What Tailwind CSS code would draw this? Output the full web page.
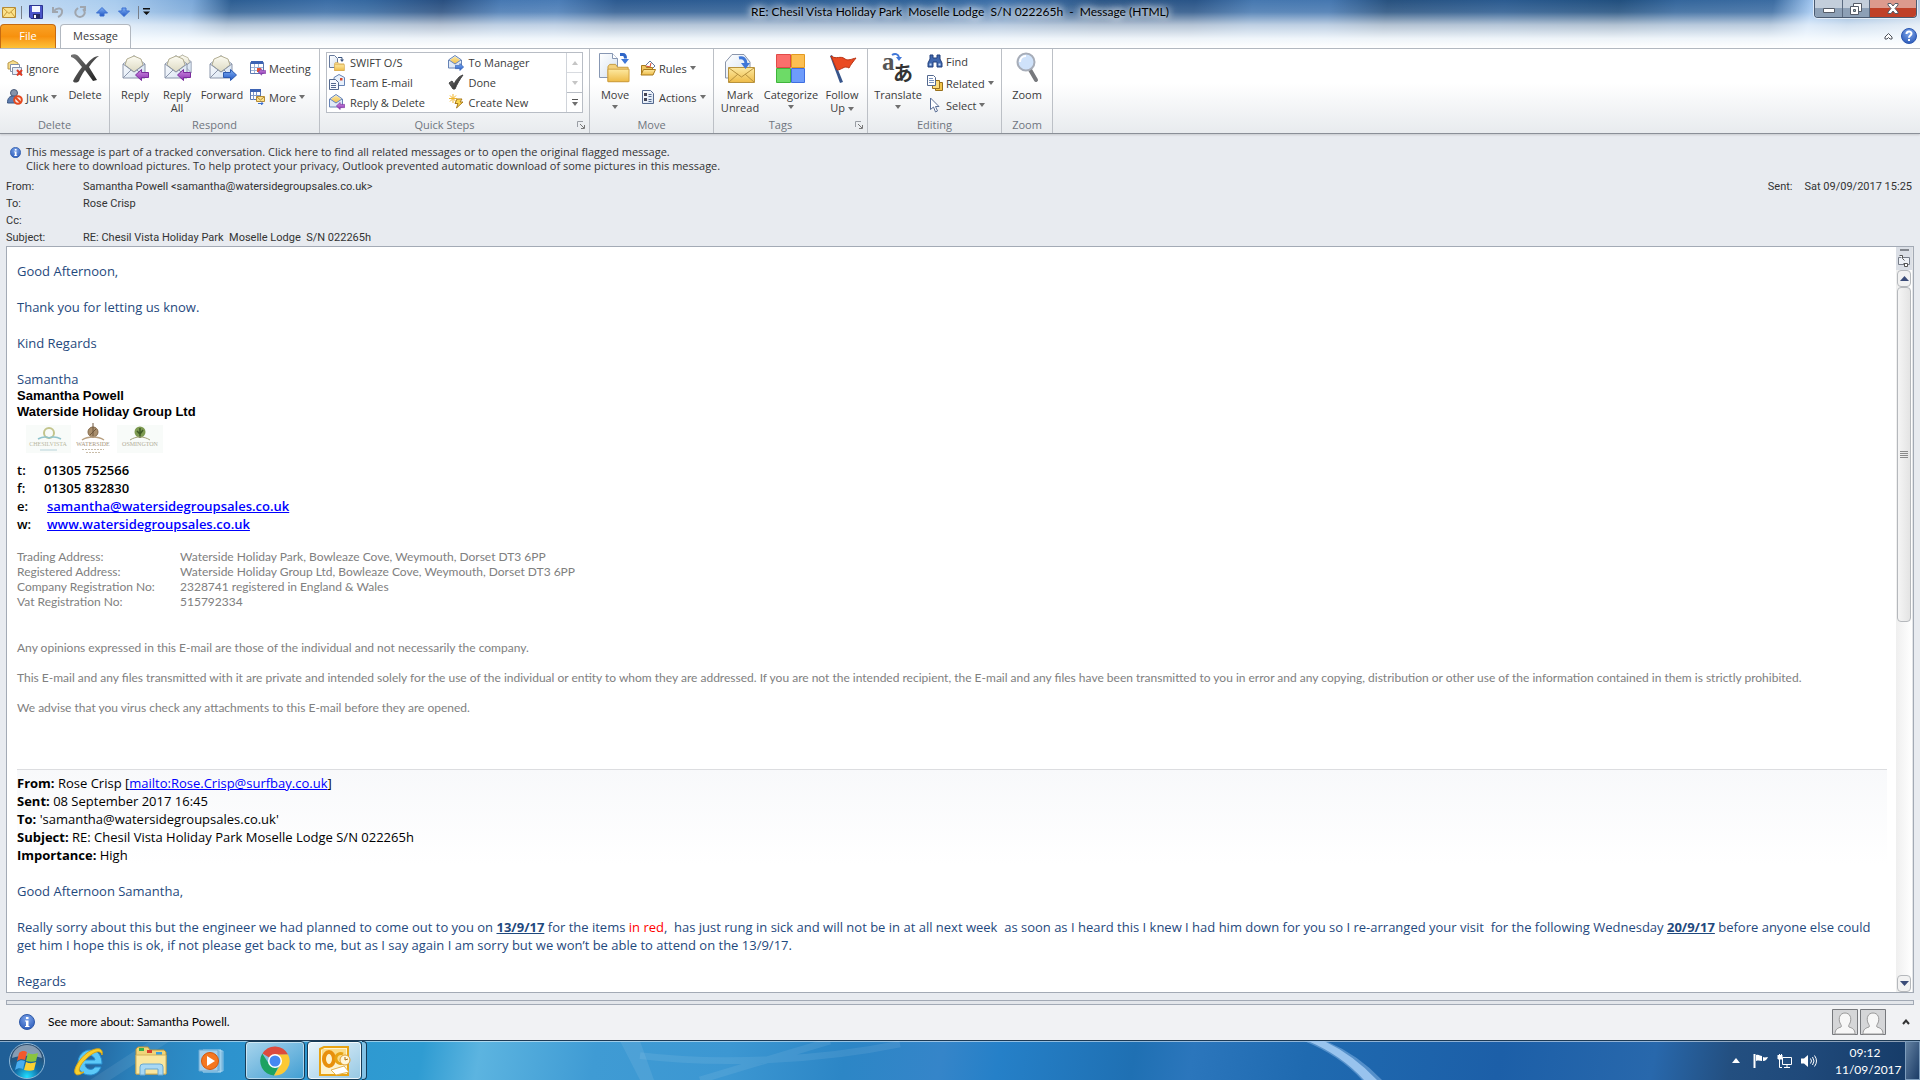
<!DOCTYPE html>
<html lang="en">
<head>
    <meta charset="UTF-8">
    <meta name="viewport" content="width=device-width, initial-scale=1.0">
    <title>RE: Chesil Vista Holiday Park Moselle Lodge S/N 022265h - Message (HTML)</title>
    <script src="https://cdn.jsdelivr.net/npm/@tailwindcss/browser@4"></script>
</head>
<body class="flex h-screen flex-col overflow-hidden bg-[#e8ebf0] font-['Open_Sans',sans-serif] text-[11px] text-[#3b3b3b]">

    <!-- shared icon shapes -->
    <svg class="absolute size-0">
        <defs>
            <linearGradient id="g-env" x1="0" y1="0" x2="0" y2="1"><stop offset="0" stop-color="#fdfcf3"/><stop offset="1" stop-color="#dcd9c2"/></linearGradient>
            <linearGradient id="g-paper" x1="0" y1="0" x2="1" y2="1"><stop offset="0" stop-color="#ffffff"/><stop offset="1" stop-color="#d4e1f1"/></linearGradient>
            <linearGradient id="g-gold" x1="0" y1="0" x2="0" y2="1"><stop offset="0" stop-color="#fde9a0"/><stop offset="1" stop-color="#eebb48"/></linearGradient>
            <linearGradient id="g-blue" x1="0" y1="0" x2="0" y2="1"><stop offset="0" stop-color="#7fb0f4"/><stop offset="1" stop-color="#2458c4"/></linearGradient>
            <linearGradient id="g-purple" x1="0" y1="0" x2="0" y2="1"><stop offset="0" stop-color="#cf8fe2"/><stop offset="1" stop-color="#8a2fb0"/></linearGradient>
            <linearGradient id="g-dark" x1="0" y1="0" x2="1" y2="1"><stop offset="0" stop-color="#777"/><stop offset="1" stop-color="#1e1e1e"/></linearGradient>
            <radialGradient id="g-info" cx="50%" cy="30%" r="70%"><stop offset="0" stop-color="#7ea6ea"/><stop offset="1" stop-color="#2e5dbb"/></radialGradient>
        </defs>
        <symbol id="open-mail" viewBox="0 0 24 24">
            <path d="M1 9 12 0.700 23 9V23H1z" fill="url(#g-paper)" stroke="#8b96ab"/>
            <path d="M3 10 5 4 12 1 19 4 21 10 12 17z" fill="url(#g-env)" stroke="#b3ae93"/>
            <path d="M1 9 12 17 23 9M1 23 9 15M23 23 15 15" fill="none" stroke="#8b96ab"/>
        </symbol>
        <symbol id="arrow-left" viewBox="0 0 14 12"><path d="M.5 6 6.500.5v3h7v5h-7v3z" fill="url(#g-purple)" stroke="#7b2d9d"/></symbol>
        <symbol id="arrow-right" viewBox="0 0 14 12"><path d="M13.500 6 7.500.5v3h-7v5h7v3z" fill="url(#g-blue)" stroke="#2c5ab0"/></symbol>
        <symbol id="folder" viewBox="0 0 24 20"><path d="M1 3 3 1h6l2 3h11v15H1z" fill="#f3d07c" stroke="#c79a3c"/><path d="M1 6h22v13H1z" fill="url(#g-gold)" stroke="#cf9f40"/></symbol>
        <symbol id="info" viewBox="0 0 16 16"><circle cx="8" cy="8" r="7.500" fill="url(#g-info)" stroke="#2f5aa8"/><path d="M7 3h2.500v2H7zM6 6.500h3.500V12h1v1H6v-1h1V7.500H6z" fill="#fff"/></symbol>
        <symbol id="caret" viewBox="0 0 6 4"><path d="M0 0h6L3 4z" fill="#6f6f6f"/></symbol>
        <symbol id="launcher" viewBox="0 0 8 8"><path d="M.5 6V.5H6" fill="none" stroke="#9a9ea5"/><path d="M3 3l4 4M7.500 4v3.500H4" fill="none" stroke="#777"/></symbol>
        <symbol id="person" viewBox="0 0 26 26">
            <path d="M.5.5h25v25H.5z" fill="#d5d6d8" stroke="#77797d"/>
            <path d="M3 25c0-5 3-6 6-7 1-1 0-2-1-4-2-5 0-10 5-10s7 5 5 10c-1 2-2 3-1 4 3 1 6 2 6 7z" fill="#f7f7f7" stroke="#999"/>
        </symbol>
    </svg>

    <!-- title bar and tabs -->
    <header class="relative h-12 shrink-0 overflow-hidden bg-[linear-gradient(to_bottom,rgba(255,255,255,0)_0%,rgba(255,255,255,0.12)_25%,rgba(255,255,255,0.65)_52%,rgba(248,252,255,0.95)_80%,#ffffff_100%),linear-gradient(100deg,#c3dbf3_0%,#a8cbee_6%,#7ba8d8_10%,#2c5d92_12%,#3a6da6_17%,#3568a0_19%,#294f80_23%,#4678b2_26%,#4a7cb6_29%,#2c5a90_32%,#2f6299_48%,#3d70aa_52%,#2b5687_57%,#2a5588_62%,#4678b0_65%,#4577b0_69%,#27517f_72%,#2b5b90_78%,#214f7e_84%,#34669c_87%,#3b6ca2_92%,#9fc5ef_94%,#7fa9d5_96%,#b9d0e8_100%)]">
        <div class="flex h-6 items-center">
            <div class="flex items-center pl-[2px]">
                <svg class="h-[11px] w-[14px]" viewBox="0 0 14 11"><path d="M.5.5h13v10H.5z" fill="#fbe28b" stroke="#b58a35"/><path d="M1 1 7 6.500 13 1M1 10 5 5M13 10 9 5" fill="none" stroke="#c79a3c"/></svg>
                <span class="mx-[5px] h-[13px] w-px bg-[#777f8a]"></span>
                <button type="button" aria-label="Save" class="ml-[2px]"><svg class="size-[14px]" viewBox="0 0 14 14"><path d="M.5.5h13v13H2L.5 12z" fill="#4b55c8" stroke="#2c3590"/><path d="M3 1h8v6H3z" fill="#f4f7ff"/><path d="M4 9h7v4.500H4z" fill="#252a60"/><path d="M5 10h2v3H5z" fill="#fff"/></svg></button>
                <button type="button" aria-label="Undo" class="ml-[9px]"><svg class="size-3" viewBox="0 0 12 12"><path d="M1 1v5h5M2 5C5 1 11 2 10 6c0 3-2 4-4 5" fill="none" stroke="#a0a6ae" stroke-width="2"/></svg></button>
                <button type="button" aria-label="Redo" class="ml-[10px]"><svg class="size-3" viewBox="0 0 12 12"><path d="M6 1h5v4M9 3c4 4 0 8-3 8S0 8 2 4l2-2" fill="none" stroke="#a0a6ae" stroke-width="2"/></svg></button>
                <button type="button" aria-label="Previous" class="ml-[10px]"><svg class="size-3" viewBox="0 0 12 12"><path d="M6 1.500 11.500 7H8v3H4V7H.5z" fill="url(#g-blue)" stroke="#3a6ed0"/></svg></button>
                <button type="button" aria-label="Next" class="ml-[10px]"><svg class="size-3" viewBox="0 0 12 12"><path d="M6 10.500.5 5H4V2h4v3h3.500z" fill="url(#g-blue)" stroke="#3a6ed0"/></svg></button>
                <span class="ml-2 h-[13px] w-px bg-[#777f8a]"></span>
                <button type="button" aria-label="Customize" class="ml-1"><svg class="h-2 w-[7px]" viewBox="0 0 7 8"><path d="M0 0h7v1.500H0zM0 3.500h7L3.500 7z" fill="#111"/></svg></button>
            </div>
        </div>
        <h1 class="absolute inset-x-0 top-[3px] text-center font-[Lato,sans-serif] text-xs leading-[18px] whitespace-pre text-black [text-shadow:0_0_6px_#fff,0_0_8px_#fff,0_0_12px_rgba(255,255,255,0.8)]">RE: Chesil Vista Holiday Park  Moselle Lodge  S/N 022265h  -  Message (HTML)</h1>
        <div class="absolute top-0 right-[3px] flex h-[18px] overflow-hidden rounded-b border border-t-0 border-[#4a5a70] shadow-[0_0_0_1px_rgba(255,255,255,0.6)]">
            <button type="button" aria-label="Minimize" class="flex w-7 items-center justify-center border-r border-[#5a6a80] bg-linear-to-b from-[#c3cedb] from-50% to-[#8da0b6] to-50%"><svg class="mt-1 h-[5px] w-3" viewBox="0 0 12 5"><path d="M.5.5h11v4H.5z" fill="#fff" stroke="#555c68"/></svg></button>
            <button type="button" aria-label="Restore" class="flex w-[27px] items-center justify-center border-r border-[#5a6a80] bg-linear-to-b from-[#c3cedb] from-50% to-[#8da0b6] to-50%"><svg class="size-3" viewBox="0 0 12 12"><path d="M3.500.5h8v8h-8z" fill="#fff" stroke="#555c68"/><path d="M.5 3.500h8v8h-8z" fill="#fff" stroke="#555c68"/><path d="M3.500 6.500h2v2h-2z" fill="#9bb" stroke="#555c68"/></svg></button>
            <button type="button" aria-label="Close" class="flex w-[46px] items-center justify-center bg-linear-to-b from-[#dc9a8e] from-50% to-[#bf4028] to-50%"><svg class="h-[11px] w-3" viewBox="0 0 12 11"><path d="M1 .5h3L6 3l2-2.500h3v1.500L8 5.500 11 9v1.500H8L6 8l-2 2.500H1V9l3-3.500L1 2z" fill="#fff" stroke="#555c68"/></svg></button>
        </div>
        <nav class="flex h-6 items-end justify-between">
            <div class="flex">
                <button type="button" class="h-6 w-14 rounded-t border border-b-0 border-[#c46a12] bg-linear-to-b from-[#f9a224] via-[#f7910d] to-[#fdc136] text-white">File</button>
                <button type="button" class="z-10 ml-1 h-6 w-[71px] rounded-t border border-b-0 border-[#b2b8c0] bg-white">Message</button>
            </div>
            <div class="flex h-6 items-center gap-2 pr-[3px]">
                <button type="button" aria-label="Minimize the ribbon"><svg class="h-2 w-[9px]" viewBox="0 0 9 8"><path d="M1 5 4.500 1.500 8 5v2H6L4.500 5.500 3 7H1z" fill="#fff" stroke="#4a4f58"/></svg></button>
                <button type="button" aria-label="Help"><svg class="size-4" viewBox="0 0 16 16"><circle cx="8" cy="8" r="7.500" fill="url(#g-info)" stroke="#2b57b0"/><path d="M5.500 6c0-3.500 5-3.200 5-.5C10.500 7.500 8 7.500 8 9.700" fill="none" stroke="#fff" stroke-width="2"/><path d="M7 11h2v2H7z" fill="#fff"/></svg></button>
            </div>
        </nav>
    </header>

    <!-- ribbon -->
    <div class="flex h-[86px] shrink-0 border-t border-b border-t-[#b2b8c0] border-b-[#8a8f97] bg-linear-to-b from-white from-40% to-[#e8ebee] leading-[13px] shadow-[0_1px_2px_rgba(0,0,0,0.15)]">
        <section class="flex w-[110px] flex-col border-r border-[#bcc0c6]">
            <div class="flex flex-1 pl-[7px]">
                <div class="flex w-[60px] flex-col gap-[9px] pt-[9px]">
                    <button type="button" class="flex h-5 items-center gap-[3px]"><svg class="size-4" viewBox="0 0 16 16"><path d="M1 3 6 .5 11 3v6H1z" fill="#f7dd8c" stroke="#b99748"/><path d="M3.500 4.500h9v7h-9z" fill="#fff" stroke="#8490a8"/><path d="M5.500 7.500h9v7h-9z" fill="#e6ecf6" stroke="#8490a8"/><path d="m10 10 5 5.500M15 10l-5 5.500" stroke="#e03c25" stroke-width="2"/></svg>Ignore</button>
                    <button type="button" class="flex h-5 items-center gap-[3px]"><svg class="size-4" viewBox="0 0 16 16"><circle cx="7" cy="4" r="3.500" fill="#8593ab" stroke="#4b5b78"/><path d="M.5 14c0-5 2-7 6-7s5 3 5 7z" fill="#5f7fb2" stroke="#3b557f"/><circle cx="11" cy="11" r="3.800" fill="#fbe5dd" stroke="#e4491f" stroke-width="2"/><path d="m8.500 8.500 5 5" stroke="#e4491f" stroke-width="2"/></svg>Junk<svg class="h-1 w-[6px]"><use href="#caret"/></svg></button>
                </div>
                <button type="button" class="flex w-9 flex-col items-center pt-[3px]"><svg class="size-8" viewBox="0 0 32 32"><path d="M2 3c4-2 7 0 9 3l6 7c4-5 8-9 13-9-3 2-7 6-10 11l8 13-4 1-8-11c-3 4-5 8-6 11-2 2-5 2-6 0 2-4 5-9 9-14C9 10 6 6 2 5z" fill="url(#g-dark)"/></svg><span class="mt-1">Delete</span></button>
            </div>
            <h2 class="h-[15px] text-center text-[#6f757e]">Delete</h2>
        </section>
        <section class="flex w-[210px] flex-col border-r border-[#bcc0c6]">
            <div class="flex flex-1 pl-1">
                <button type="button" class="flex w-[42px] flex-col items-center pt-[3px]"><svg class="size-8" viewBox="0 0 32 32"><use href="#open-mail" x="3" y="3" width="24" height="24"/><use href="#arrow-left" x="16" y="17" width="14" height="12"/></svg><span class="mt-1">Reply</span></button>
                <button type="button" class="flex w-[42px] flex-col items-center pt-[3px]"><svg class="size-8" viewBox="0 0 32 32"><use href="#open-mail" x="12" y="1" width="19" height="22"/><use href="#open-mail" x="3" y="3" width="24" height="24"/><use href="#arrow-left" x="16" y="17" width="14" height="12"/></svg><span class="mt-1">Reply<br>All</span></button>
                <button type="button" class="flex w-12 flex-col items-center pt-[3px]"><svg class="size-8" viewBox="0 0 32 32"><use href="#open-mail" x="3" y="3" width="24" height="24"/><use href="#arrow-right" x="17" y="17" width="14" height="12"/></svg><span class="mt-1">Forward</span></button>
                <div class="flex flex-col gap-[9px] pt-[9px] pl-1">
                    <button type="button" class="flex h-5 items-center gap-[3px]"><svg class="size-4" viewBox="0 0 16 16"><path d="M.5 2.500h13v11H.5z" fill="#fff" stroke="#5b78b0"/><path d="M1 1h12v3H1z" fill="#3d63b4"/><path d="M4.500 4v9M8.500 4v9M1 7.500h12M1 10.500h12" stroke="#9db2d8"/><path d="M7 8h4v4H7z" fill="#e25238"/><use href="#arrow-left" x="8" y="8" width="8" height="8"/></svg>Meeting</button>
                    <button type="button" class="flex h-5 items-center gap-[3px]"><svg class="size-4" viewBox="0 0 16 16"><path d="M.5 2.500h10v8H.5z" fill="#fff" stroke="#5b78b0"/><path d="M0 0h11v3H0z" fill="#3d63b4"/><path d="M3.500 3v8M6.500 3v8M1 6.500h9" stroke="#7d98ca"/><path d="M6.500 7.500h8v5h-8z" fill="#fbe28b" stroke="#b58a35"/><path d="m7 8 3.500 3L14 8" fill="none" stroke="#b58a35"/><path d="M8 14.500h5m-2-2 2 2-2 1.500" fill="none" stroke="#3a6ed0"/></svg>More<svg class="h-1 w-[6px]"><use href="#caret"/></svg></button>
                </div>
            </div>
            <h2 class="h-[15px] text-center text-[#6f757e]">Respond</h2>
        </section>
        <section class="flex w-[270px] flex-col border-r border-[#bcc0c6]">
            <div class="flex-1 px-[6px] pt-[3px]">
                <div class="flex h-[61px] border border-[#b8bdc5] bg-white">
                    <div class="grid flex-1 grid-cols-2 grid-rows-3 pl-[2px]">
                        <button type="button" class="flex items-center gap-[5px]"><svg class="size-4" viewBox="0 0 16 16"><path d="M.5.5h5l3 3v9h-8z" fill="url(#g-paper)" stroke="#66799c"/><path d="M9 2.500h4v3" fill="none" stroke="#3b557f"/><path d="M11 4.500h4L13 7z" fill="#3b557f"/><use href="#folder" x="5" y="7" width="11" height="9"/></svg>SWIFT O/S</button>
                        <button type="button" class="flex items-center gap-[5px]"><svg class="size-4" viewBox="0 0 16 16"><path d="M.5 5 7 .5 13.500 5v8H.5z" fill="#dfe9f8" stroke="#6683b5"/><path d="M2 5 7 1.500 12 5 7 9z" fill="url(#g-gold)"/><path d="m1 5 6 4 6-4" fill="none" stroke="#6683b5"/><use href="#arrow-right" x="7" y="8" width="9" height="8"/></svg>To Manager</button>
                        <button type="button" class="flex items-center gap-[5px]"><svg class="size-4" viewBox="0 0 16 16"><path d="M5 3.500 10 .5l5.500 3v8H5z" fill="#e8f1fc" stroke="#6683b5"/><path d="M11 4h2.500v2.500H11z" fill="#d8472c"/><path d="M.5 5.500h6l3 3v7h-9z" fill="#f7faff" stroke="#54698f"/><path d="M2 9.500h5M2 11.500h5M2 13.500h5" stroke="#54698f"/></svg>Team E-mail</button>
                        <button type="button" class="flex items-center gap-[5px]"><svg class="size-4" viewBox="0 0 16 16"><path d="m1 9 3-2 2 3c2-4 5-8 9-9C12 5 9 10 7 15H5z" fill="url(#g-dark)" stroke="#444"/></svg>Done</button>
                        <button type="button" class="flex items-center gap-[5px]"><svg class="size-4" viewBox="0 0 16 16"><path d="M.5 5 7 .5 13.500 5v8H.5z" fill="#dfe9f8" stroke="#6683b5"/><path d="M2 5 7 1.500 12 5 7 9z" fill="url(#g-gold)"/><path d="m1 5 6 4 6-4" fill="none" stroke="#6683b5"/><use href="#arrow-left" x="7" y="8" width="9" height="8"/></svg>Reply &amp; Delete</button>
                        <button type="button" class="flex items-center gap-[5px]"><svg class="size-4" viewBox="0 0 16 16"><path d="M5 0v9M1 4.500h8M2 1.500l6 6M8 1.500l-6 6" stroke="#f0b52c"/><path d="M9 5h5l-2 3h3l-6.500 6 1.500-4.500H7z" fill="#fbd750" stroke="#a97a1c"/></svg>Create New</button>
                    </div>
                    <div class="flex w-4 flex-col border-l border-[#d0d4da]">
                        <button type="button" aria-label="Scroll up" class="flex flex-1 items-center justify-center border-b border-[#d8dbe0]"><svg class="h-1 w-[6px] rotate-180 opacity-40"><use href="#caret"/></svg></button>
                        <button type="button" aria-label="Scroll down" class="flex flex-1 items-center justify-center border-b border-[#b8bdc5]"><svg class="h-1 w-[6px] opacity-40"><use href="#caret"/></svg></button>
                        <button type="button" aria-label="More quick steps" class="flex flex-1 flex-col items-center justify-center gap-[2px]"><span class="h-px w-[6px] bg-[#555]"></span><svg class="h-1 w-[6px]"><use href="#caret"/></svg></button>
                    </div>
                </div>
            </div>
            <div class="flex h-[15px] items-start pr-1"><h2 class="flex-1 pr-2 text-center text-[#6f757e]">Quick Steps</h2><button type="button" aria-label="Quick Steps options"><svg class="mt-[3px] size-2"><use href="#launcher"/></svg></button></div>
        </section>
        <section class="flex w-[124px] flex-col border-r border-[#bcc0c6]">
            <div class="flex flex-1 pl-[3px]">
                <button type="button" class="flex w-11 flex-col items-center pt-[3px]"><svg class="size-8" viewBox="0 0 32 32"><path d="M.5 1.500h13l5 5v19H.5z" fill="url(#g-paper)" stroke="#8797b3"/><path d="M13.500 1.500v5h5" fill="#fff" stroke="#8797b3"/><path d="M21 2.500h3c2 0 2.500 2 2.500 4" fill="none" stroke="#2f66c8" stroke-width="3"/><path d="M22 7h8l-4 5z" fill="#3f77d8"/><use href="#folder" x="8" y="11" width="23" height="20"/></svg><span class="mt-1">Move</span><svg class="mt-1 h-1 w-[6px]"><use href="#caret"/></svg></button>
                <div class="flex flex-col gap-[9px] pt-[9px] pl-[3px]">
                    <button type="button" class="flex h-5 items-center gap-[3px]"><svg class="size-4" viewBox="0 0 16 16"><path d="m5 6 5-5 5 5-5 5z" fill="#fff" stroke="#66799c"/><path d="m6 6 4 1 1-4" fill="none" stroke="#d8472c"/><path d="M1.500 5.500h4l1 2h6v7h-11z" fill="#f0c560" stroke="#a97a1c"/><path d="M3.500 9.500h12l-2.500 5.500H1z" fill="url(#g-gold)" stroke="#a97a1c"/></svg>Rules<svg class="h-1 w-[6px]"><use href="#caret"/></svg></button>
                    <button type="button" class="flex h-5 items-center gap-[3px]"><svg class="size-4" viewBox="0 0 16 16"><path d="M2.500 1.500h8l3 3v10h-11z" fill="url(#g-paper)" stroke="#54698f"/><path d="M4 4h3v3H4zM4 9h3v3H4z" fill="#445"/><path d="M8.500 5.500h3M8.500 7.500h3M8.500 10.500h3M8.500 12.500h3" stroke="#54698f"/></svg>Actions<svg class="h-1 w-[6px]"><use href="#caret"/></svg></button>
                </div>
            </div>
            <h2 class="h-[15px] text-center text-[#6f757e]">Move</h2>
        </section>
        <section class="flex w-[154px] flex-col border-r border-[#bcc0c6]">
            <div class="flex flex-1 pl-1">
                <button type="button" class="flex w-11 flex-col items-center pt-[3px]"><svg class="size-8" viewBox="0 0 32 32"><path d="M1.500 10 8 2.500h12l6 7.500v16H1.500z" fill="url(#g-paper)" stroke="#8b96ab"/><path d="M4.500 15.500h26v15h-26z" fill="url(#g-gold)" stroke="#b8923d"/><path d="m5 16 12.500 9L30 16M5 30l9-8M30 30l-9-8" fill="none" stroke="#b8923d"/><path d="M15 6c4-1 7 1 7 6" fill="none" stroke="#3f77d8" stroke-width="3"/><path d="M17 11h9l-4.500 6z" fill="#3f77d8"/></svg><span class="mt-1">Mark<br>Unread</span></button>
                <button type="button" class="flex w-[58px] flex-col items-center pt-[3px]"><svg class="size-8" viewBox="0 0 32 32"><path d="M1.500 2.500h14v13h-14z" fill="#fb6f6c" stroke="#e14b48"/><path d="M16.500 2.500h13v13h-13z" fill="#fcbf52" stroke="#e49a20"/><path d="M1.500 16.500h14v14h-14z" fill="#6ddb67" stroke="#3fb43b"/><path d="M16.500 16.500h13v14h-13z" fill="#6e9cfb" stroke="#3f6ee0"/></svg><span class="mt-1">Categorize</span><svg class="mt-1 h-1 w-[6px]"><use href="#caret"/></svg></button>
                <button type="button" class="flex w-11 flex-col items-center pt-[3px]"><svg class="size-8" viewBox="0 0 32 32"><path d="m4 4 2-1 11 27-3 1z" fill="#37558b"/><path d="M5 4c6 4 9-1 14 3 3 2 7 0 11-1-3 4-5 6-7 10-5-3-7 2-12 2z" fill="#ea4a22" stroke="#b93515"/></svg><span class="mt-1">Follow<br>Up <svg class="inline h-1 w-[6px]"><use href="#caret"/></svg></span></button>
            </div>
            <div class="flex h-[15px] items-start pr-1"><h2 class="flex-1 pr-2 text-center text-[#6f757e]">Tags</h2><button type="button" aria-label="Tags options"><svg class="mt-[3px] size-2"><use href="#launcher"/></svg></button></div>
        </section>
        <section class="flex w-[134px] flex-col border-r border-[#bcc0c6]">
            <div class="flex flex-1 pl-[3px]">
                <button type="button" class="flex w-[54px] flex-col items-center pt-[3px]"><svg class="size-8 overflow-visible" viewBox="0 0 32 32"><text x="0" y="18" font-family="Liberation Serif" font-size="25" font-weight="bold" fill="#555">a</text><text x="11" y="29" font-family="Noto Sans CJK JP" font-size="20" font-weight="bold" fill="#333">あ</text><path d="M10 3c3-2 6-1 7 2" fill="none" stroke="#3f77d8" stroke-width="2"/><path d="M14 5h6l-3 4z" fill="#3f77d8"/></svg><span class="mt-1">Translate</span><svg class="mt-1 h-1 w-[6px]"><use href="#caret"/></svg></button>
                <div class="flex flex-col pt-px pl-[2px]">
                    <button type="button" class="flex h-[22px] items-center gap-[3px]"><svg class="size-4" viewBox="0 0 16 16"><path d="M3 2h3v3h4V2h3v4l2 4v4h-5V9H6v5H1v-4l2-4z" fill="#3f66ad" stroke="#23407c"/><path d="M2.500 10.500h2v2h-2zM11.500 10.500h2v2h-2z" fill="#c8dbf8"/></svg>Find</button>
                    <button type="button" class="flex h-[22px] items-center gap-[3px]"><svg class="size-4" viewBox="0 0 16 16"><path d="M8.500 7.500h7v8h-7z" fill="#f4c64c" stroke="#98701c"/><path d="M5.500 5.500h7v8h-7z" fill="#fbdc80" stroke="#98701c"/><path d="M.5.500h6l2 2v8h-8z" fill="#fff" stroke="#54698f"/><path d="M2 3.500h4M2 5.500h5M2 7.500h5" stroke="#7b93bf"/></svg>Related<svg class="h-1 w-[6px]"><use href="#caret"/></svg></button>
                    <button type="button" class="flex h-[22px] items-center gap-[3px]"><svg class="size-4" viewBox="0 0 16 16"><path d="M3.500 1v11.500l3-2.500 2 5 2-1-2-4.500H12z" fill="#fff" stroke="#5b6f96"/></svg>Select<svg class="h-1 w-[6px]"><use href="#caret"/></svg></button>
                </div>
            </div>
            <h2 class="h-[15px] text-center text-[#6f757e]">Editing</h2>
        </section>
        <section class="flex w-[51px] flex-col border-r border-[#bcc0c6]">
            <button type="button" class="flex flex-1 flex-col items-center pt-[3px]"><svg class="size-8" viewBox="0 0 32 32"><path d="m18 16 7 12" stroke="#77797d" stroke-width="4" stroke-linecap="round"/><circle cx="15" cy="10" r="8.500" fill="#cfe2fa" stroke="#a7adb8" stroke-width="2"/><path d="M9 10c0-4 3-6 6-6" fill="none" stroke="#fff" stroke-width="2"/></svg><span class="mt-1">Zoom</span></button>
            <h2 class="h-[15px] text-center text-[#6f757e]">Zoom</h2>
        </section>
    </div>

    <!-- info bar and message header -->
    <div class="flex shrink-0 gap-[5px] pt-[11px] pl-[10px] leading-[14px] text-[#333]">
        <svg class="mt-[2px] size-[11px]"><use href="#info"/></svg>
        <div>
            <p>This message is part of a tracked conversation. Click here to find all related messages or to open the original flagged message.</p>
            <p>Click here to download pictures. To help protect your privacy, Outlook prevented automatic download of some pictures in this message.</p>
        </div>
    </div>
    <div class="flex shrink-0 justify-between pt-[5px] pr-2 pl-[6px] font-[Roboto,sans-serif] leading-[17px] text-[#333]">
        <dl class="grid grid-cols-[77px_auto] whitespace-pre">
            <dt>From:</dt><dd>Samantha Powell &lt;samantha@watersidegroupsales.co.uk&gt;</dd>
            <dt>To:</dt><dd>Rose Crisp</dd>
            <dt>Cc:</dt><dd></dd>
            <dt>Subject:</dt><dd>RE: Chesil Vista Holiday Park  Moselle Lodge  S/N 022265h</dd>
        </dl>
        <dl class="flex gap-3"><dt>Sent:</dt><dd>Sat 09/09/2017 15:25</dd></dl>
    </div>

    <!-- message body -->
    <main class="mx-[6px] flex min-h-0 flex-1 border border-[#a3aab5] bg-white">
        <article class="min-w-0 flex-1 overflow-hidden pt-[15px] pr-[9px] pl-[10px] text-[13px] leading-[18px] text-[#1f497d]">
            <p class="mb-[18px]">Good Afternoon,</p>
            <p class="mb-[18px]">Thank you for letting us know.</p>
            <p class="mb-[18px]">Kind Regards</p>
            <p>Samantha</p>
            <div class="font-['Liberation_Sans',sans-serif] leading-4 font-bold text-black">
                <p>Samantha Powell</p>
                <p>Waterside Holiday Group Ltd</p>
            </div>
            <!-- park logos -->
            <svg class="h-[41px] w-[150px]" viewBox="0 0 150 41" text-anchor="middle" font-family="Liberation Serif" font-size="7">
                <path d="M9 5h45v28H9zM100 5h46v28h-46z" fill="#f8fbf9"/>
                <circle cx="32" cy="13" r="5" fill="none" stroke="#c3c48c" stroke-width="2"/>
                <path d="M21 19c7-4 11-1 11-1s5-3 12 1" fill="none" stroke="#8fc3cc" stroke-width="1.500"/>
                <text x="31" y="26" font-size="6" fill="#b9b89f">CHESILVISTA</text>
                <path d="M23 30h17" stroke="#b7d3da"/>
                <circle cx="76" cy="12" r="5" fill="#a98e6c" stroke="#83694b"/><path d="M76 3v15M73 15l6-6" stroke="#6e573c"/>
                <path d="M65 20c6-4 16-4 22 0" fill="none" stroke="#b8a081" stroke-width="1.500"/>
                <text x="76" y="26" font-size="6" fill="#a8977f">WATERSIDE</text>
                <path d="M65 29.500h22M69 32.500h14" stroke="#c9bda9" stroke-dasharray="2 1"/>
                <circle cx="123" cy="12" r="5.500" fill="#7d9a50"/><path d="M123 8v10M120 11l3 3 3-4" stroke="#3e5a25" stroke-width="1.500" fill="none"/>
                <path d="M113 20c6-4 14-4 20 0" fill="none" stroke="#a5a27a"/>
                <text x="123" y="26" font-size="6" fill="#b0ab98">OSMINGTON</text>
            </svg>
            <dl class="grid grid-cols-[27px_auto] font-semibold text-black">
                <dt>t:</dt><dd>01305 752566</dd>
                <dt>f:</dt><dd>01305 832830</dd>
                <dt>e:</dt><dd class="pl-[3px]"><a href="mailto:samantha@watersidegroupsales.co.uk" class="text-[#0000ff] underline">samantha@watersidegroupsales.co.uk</a></dd>
                <dt>w:</dt><dd class="pl-[3px]"><a href="http://www.watersidegroupsales.co.uk" class="text-[#0000ff] underline">www.watersidegroupsales.co.uk</a></dd>
            </dl>
            <div class="pt-4 font-[Lato,sans-serif] text-xs leading-[15px] text-[#808080]">
                <table>
                    <tr><th scope="row" class="w-[163px] text-left font-normal">Trading Address:</th><td>Waterside Holiday Park, Bowleaze Cove, Weymouth, Dorset DT3 6PP</td></tr>
                    <tr><th scope="row" class="text-left font-normal">Registered Address:</th><td>Waterside Holiday Group Ltd, Bowleaze Cove, Weymouth, Dorset DT3 6PP</td></tr>
                    <tr><th scope="row" class="text-left font-normal">Company Registration No:</th><td>2328741 registered in England &amp; Wales</td></tr>
                    <tr><th scope="row" class="text-left font-normal">Vat Registration No:</th><td>515792334</td></tr>
                </table>
                <p class="mt-[31px]">Any opinions expressed in this E-mail are those of the individual and not necessarily the company.</p>
                <p class="mt-[15px]">This E-mail and any files transmitted with it are private and intended solely for the use of the individual or entity to whom they are addressed. If you are not the intended recipient, the E-mail and any files have been transmitted to you in error and any copying, distribution or other use of the information contained in them is strictly prohibited.</p>
                <p class="mt-[15px]">We advise that you virus check any attachments to this E-mail before they are opened.</p>
            </div>
            <div class="mt-[54px] border-t border-[#dcdde0] bg-linear-to-b from-[#f8f9fb] to-white pt-1 text-black">
                <p><b>From:</b> Rose Crisp [<a href="mailto:Rose.Crisp@surfbay.co.uk" class="text-[#0000ff] underline">mailto:Rose.Crisp@surfbay.co.uk</a>]</p>
                <p><b>Sent:</b> 08 September 2017 16:45</p>
                <p><b>To:</b> 'samantha@watersidegroupsales.co.uk'</p>
                <p><b>Subject:</b> RE: Chesil Vista Holiday Park Moselle Lodge S/N 022265h</p>
                <p><b>Importance:</b> High</p>
            </div>
            <p class="mt-[18px]">Good Afternoon Samantha,</p>
            <p class="mt-[18px]">Really sorry about this but the engineer we had planned to come out to you on <b class="underline">13/9/17</b> for the items <span class="text-[#ff0000]">in red</span>,&nbsp; has just rung in sick and will not be in at all next week&nbsp; as soon as I heard this I knew I had him down for you so I re-arranged your visit&nbsp; for the following Wednesday <b class="underline">20/9/17</b> before anyone else could<br>get him I hope this is ok, if not please get back to me, but as I say again I am sorry but we won’t be able to attend on the 13/9/17.</p>
            <p class="mt-[18px]">Regards</p>
        </article>
        <div class="flex w-[17px] flex-col border-r border-[#e3e5e8] bg-linear-to-r from-[#efefef] to-white">
            <div class="flex h-[23px] flex-col items-center gap-1 bg-[#dbdfe6] pt-[2px]">
                <span class="h-[2px] w-[9px] bg-[#82868d]"></span>
                <svg class="size-3" viewBox="0 0 12 12"><path d="M.5 2.500h11v7H.5z" fill="#eef1f6" stroke="#777d88"/><path d="M1.500.5h3v3l2 2M5.500 8.500h4v3h-3v-3" fill="#fff" stroke="#555"/></svg>
            </div>
            <button type="button" aria-label="Scroll up" class="mx-px flex h-[17px] shrink-0 items-center justify-center rounded-sm border border-[#b5b8bc] bg-[#f2f2f2]"><svg class="h-[5px] w-[9px]" viewBox="0 0 9 5"><path d="M0 5h9L4.500 0z" fill="#3b4c78"/></svg></button>
            <div class="mx-px flex h-[45%] flex-col items-center justify-center gap-px rounded-sm border border-[#b5b8bc] bg-linear-to-r from-[#f5f5f5] to-[#e4e4e4]">
                <span class="h-px w-2 bg-[#8a8a8a]"></span><span class="h-px w-2 bg-[#8a8a8a]"></span><span class="h-px w-2 bg-[#8a8a8a]"></span><span class="h-px w-2 bg-[#8a8a8a]"></span>
            </div>
            <button type="button" aria-label="Scroll down" class="mx-px mt-auto flex h-[17px] shrink-0 items-center justify-center rounded-sm border border-[#b5b8bc] bg-[#f2f2f2]"><svg class="h-[5px] w-[9px]" viewBox="0 0 9 5"><path d="M0 0h9L4.500 5z" fill="#3b4c78"/></svg></button>
        </div>
    </main>

    <!-- people pane -->
    <div class="mt-[7px] shrink-0 bg-[#f1f2f4] px-[6px] font-[Lato,sans-serif] text-xs text-black">
        <div class="h-[5px] border border-[#a3aab5] bg-[#e3e6ea]"></div>
        <div class="flex h-[35px] items-center pr-1 pb-px pl-[13px]">
            <svg class="size-4"><use href="#info"/></svg>
            <p class="ml-[13px] flex-1">See more about: Samantha Powell.</p>
            <svg class="mr-[2px] size-[26px]"><use href="#person"/></svg>
            <svg class="size-[26px]"><use href="#person"/></svg>
            <button type="button" aria-label="Expand" class="ml-4"><svg class="h-[6px] w-2" viewBox="0 0 8 6"><path d="m1 5 3-3.500L7 5" fill="none" stroke="#333" stroke-width="2"/></svg></button>
        </div>
    </div>

    <!-- taskbar -->
    <footer class="relative flex h-10 shrink-0 items-stretch justify-between overflow-hidden border-t border-[#1d3a55] bg-[linear-gradient(100deg,#1f5f97_0%,#215f98_4%,#2a7fb9_7%,#2d93ce_12%,#2f9cd2_22%,#5cb4e0_25%,#3f9bd4_31%,#3c97d2_38%,#2c86c6_44%,#3585c9_49%,#2580c8_52%,#1f70b3_59%,#2b76bc_62%,#1f6ab0_68%,#1c5fa8_78%,#2868ac_86%,#234f80_90%,#1f497a_94%,#153a66_100%)] shadow-[inset_0_1px_0_rgba(255,255,255,0.5)]">
        <svg class="absolute inset-0 h-full w-full" viewBox="0 0 1920 40" preserveAspectRatio="none">
            <path d="M1304 0q36 15 58 40h20q-24-26-56-40z" fill="#a5cdf5" opacity=".4"/>
            <path d="M1308 0q34 15 56 40h13q-24-26-53-40z" fill="#a5cdf5" opacity=".85"/>
            <path d="M90 40 150 0h20L110 40zM620 0l20 40h14L640 0z" fill="#fff" opacity=".08"/>
            <path d="M640 15c80 10 180 5 260-12M700 40 830 0" fill="none" stroke="#fff" stroke-width="7" opacity=".08"/>
        </svg>
        <div class="relative flex">
            <button type="button" aria-label="Start" class="flex w-[54px] items-center justify-center"><svg class="size-9" viewBox="0 0 36 36"><defs><radialGradient id="g-orb" cx="50%" cy="95%" r="80%"><stop offset="0" stop-color="#20dfff"/><stop offset=".45" stop-color="#126aa5"/><stop offset="1" stop-color="#2b4c6e"/></radialGradient></defs><circle cx="18" cy="18" r="17.500" fill="url(#g-orb)" stroke="#8fb8d8"/><path d="M3 15C4 6 11 2 18 2s14 4 15 13c-9-3-21-3-30 0z" fill="#cfdde9" opacity=".55"/><path d="M10 10c3-3 6-2 8-1l-2 8c-3-1-5-1-8 1z" fill="#f2592c"/><path d="M19 10c4 2 7 1 10 0l-2 8c-3 1-6 1-10 0z" fill="#8ac53e"/><path d="M8 19c3-2 5-2 8-1l-2 8c-3-1-5-1-8 1z" fill="#48aef0"/><path d="M17 19c4 2 7 1 10 0l-2 8c-3 1-6 1-10 0z" fill="#fbd133"/></svg></button>
            <button type="button" aria-label="Internet Explorer" class="flex w-[70px] items-center justify-center"><svg class="size-8" viewBox="0 0 32 32"><path fill-rule="evenodd" d="M17 5c8 0 12 6 12 14H12c0 6 8 7 10 3h6c-2 6-7 8-11 8C9 30 5 25 5 18S10 5 17 5zm-5 10h10c-1-6-9-6-10 0z" fill="#5cc9f8" stroke="#2a8fd0"/><path d="M29 10c2-9-8-7-15-2S0 24 2 28c1 3 5 2 9-1-7 2-6-5 1-12S27 3 29 10z" fill="#f9cf2c" stroke="#d9a514"/></svg></button>
            <button type="button" aria-label="Windows Explorer" class="flex w-[54px] items-center justify-center"><svg class="h-8 w-[34px]" viewBox="0 0 34 32"><path d="M2 4 4 2h10l2 3h14l2 2v22H2z" fill="#f0d57a" stroke="#b7923a"/><path d="M5 3h5v3H5z" fill="#35b04a"/><path d="M13 5h5v3h-5z" fill="#d8402c"/><path d="M22 7h6v3h-6z" fill="#3ba0e0"/><path d="M2 10h30v19H2z" fill="#fae79f" stroke="#d2b25b"/><path d="M6 30v-8q0-3 3-3h17q3 0 3 3v8h-5v-6H11v6z" fill="#a8d8f4" stroke="#68a8d2"/></svg></button>
            <button type="button" aria-label="Media Player" class="flex w-[67px] items-center justify-center pl-1"><svg class="h-7 w-8" viewBox="0 0 32 28"><path d="M9 4h16v20H9z" fill="#5fa5d2" stroke="#8cc6ea"/><path d="M5 3h18v22H5z" fill="#82bfe4" stroke="#b4dcf2"/><path d="M1 3h19v21H1z" fill="#a5d0ec" stroke="#69a9d4"/><circle cx="12" cy="14" r="8.500" fill="#f47720" stroke="#d4580c"/><path d="M9 9v10l8-5z" fill="#fff"/></svg></button>
            <button type="button" aria-label="Chrome" class="flex w-[60px] items-center justify-center rounded-sm border border-[#153c58] bg-linear-to-br from-[#b5dcf0]/90 to-[#4aa3d4]/60 shadow-[inset_0_0_0_1px_rgba(255,255,255,0.5)]"><svg class="size-[30px]" viewBox="0 0 30 30"><path d="M15 15 2.500 7.500A14.500 14.500 0 0 1 28 8.500L15 9z" fill="#dd4b3e"/><path d="M15 15 9 18 2.300 7.500A14.500 14.500 0 0 0 14 29.500l6-12z" fill="#1da261"/><path d="M14 29.500A14.500 14.500 0 0 0 28 8.500H15l5.500 10z" fill="#fcc934"/><circle cx="15" cy="15" r="7" fill="#fff"/><circle cx="15" cy="15" r="5.500" fill="#4688f1"/></svg></button>
            <button type="button" aria-label="Outlook" class="ml-[2px] flex w-[55px] items-center justify-center rounded-sm border border-[#153c58] bg-linear-to-br from-[#f4fafd]/95 to-[#a0cde6]/90 shadow-[inset_0_0_0_1px_rgba(255,255,255,0.8)]"><svg class="h-[30px] w-8" viewBox="0 0 32 30"><path d="m1 3 4-2h24v28H1z" fill="#fdf3cf" stroke="#e8a313" stroke-width="2"/><path d="M3 3h24v12H3z" fill="#f9dc8a"/><ellipse cx="10" cy="13" rx="5" ry="7" fill="#fdf3cf" stroke="#e8900c" stroke-width="4"/><path d="M24 8a5 5 0 1 0 0 9" fill="none" stroke="#e8a313" stroke-width="3"/><circle cx="26" cy="14" r="5" fill="#fff6da" stroke="#e0a030"/><path d="M26 11v3l3-1" fill="none" stroke="#a76d10"/><path d="m12 24 13-4 5 6-13 3z" fill="#fff" stroke="#e3b450"/></svg></button>
            <span class="w-[5px] rounded-r-sm border border-l-0 border-[#153c58] bg-[#9accea]/80"></span>
        </div>
        <div class="relative flex items-center font-[Lato,sans-serif] text-xs text-white">
            <svg class="h-[5px] w-2" viewBox="0 0 8 5"><path d="M0 5h8L4 0z" fill="#fff"/></svg>
            <svg class="ml-[13px] size-4" viewBox="0 0 16 16"><path d="M1.500 1v14" stroke="#fff" stroke-width="2"/><path d="M3 2c3-1 4 1 6 1v5C7 8 6 7 3 8zM10 4c2 1 3 0 5 0-1 2-2 4-5 4z" fill="#fff"/></svg>
            <svg class="ml-2 size-4" viewBox="0 0 16 16"><path d="M5.500 4.500h9v7h-9zM10 12v2M7 14.500h6M2.500 6v8.500H5" fill="none" stroke="#fff"/><path d="M1 2v4h4V2M2.500 1v2M4.500 1v2" fill="#fff" stroke="#fff"/></svg>
            <svg class="ml-2 size-4" viewBox="0 0 16 16"><path d="M0 5.500h3L7 2v12l-4-3.500H0z" fill="#fff"/><path d="M9.500 5.500q2 2.500 0 5M11.500 4q3 4 0 8M13.500 2.500q4 5.500 0 11" fill="none" stroke="#fff"/></svg>
            <div class="ml-[18px] w-[60px] text-center leading-[17px]"><p>09:12</p><p>11/09/2017</p></div>
            <button type="button" aria-label="Show desktop" class="ml-[10px] h-full w-[15px] border border-[#7d9dbd] bg-linear-to-br from-[#6482a2] to-[#1b3c66]"></button>
        </div>
    </footer>
</body>
</html>
